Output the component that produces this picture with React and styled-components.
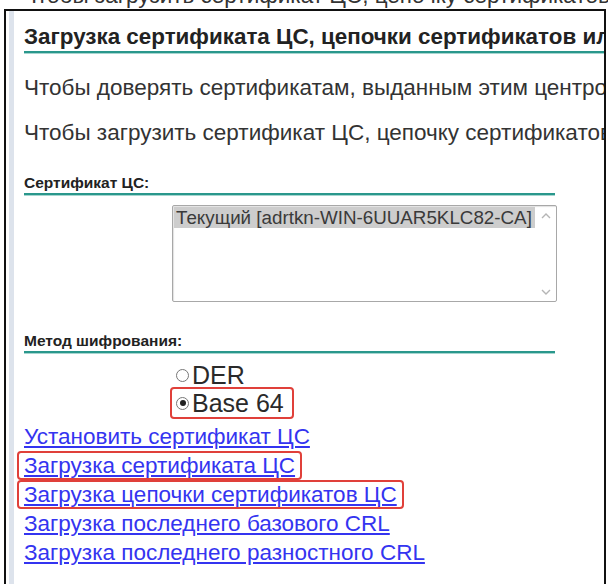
import styled, { createGlobalStyle } from "styled-components";

const GlobalStyle = createGlobalStyle`
  html, body {
    margin: 0;
    padding: 0;
    background: #fff;
  }
  body {
    font-family: "Liberation Sans", Arial, sans-serif;
    color: #2a2a2a;
    overflow: hidden;
  }
`;

const CutLine = styled.div`
  height: 9px;
  overflow: hidden;
  padding-left: 22px;
  font-size: 22.5px;
  line-height: 26px;
  white-space: nowrap;
  color: #333;
  span {
    display: block;
    margin-top: -17px;
  }
`;

const Frame = styled.div`
  margin-left: 4px;
  margin-right: 2px;
  min-height: 600px;
  border: 2px solid #111;
  border-bottom: none;
  display: flex;
`;

const SideBar = styled.div`
  width: 5px;
  margin-left: 3px;
  background: #dde3ec;
  flex-shrink: 0;
`;

const Content = styled.div`
  flex: 1;
  padding-left: 10px;
  min-width: 0;
  overflow: hidden;
`;

const Title = styled.h2`
  margin: 13px 0 0;
  font-size: 22.4px;
  font-weight: bold;
  line-height: 26px;
  white-space: nowrap;
  color: #222;
  border-bottom: 2px solid #2a978c;
  box-shadow: 0 1px 0 #a6d6d0;
  padding-bottom: 1px;
`;

const Para = styled.p`
  margin: ${(p) => p.$top}px 0 0;
  font-size: 22.5px;
  line-height: 26px;
  white-space: nowrap;
  color: #333;
`;

const SectionHead = styled.div`
  margin-top: ${(p) => p.$top}px;
  width: 531px;
  font-size: 15.5px;
  font-weight: bold;
  line-height: 18px;
  color: #222;
  border-bottom: 2px solid #2a978c;
  box-shadow: 0 1px 0 #a6d6d0;
  padding-bottom: 1px;
`;

const FieldRow = styled.div`
  padding-left: 148px;
  margin-top: ${(p) => p.$top || 0}px;
`;

const ListBox = styled.div`
  width: 383px;
  height: 95px;
  border: 1px solid #a8a8a8;
  border-radius: 2px;
  box-shadow: inset 1px 1px 1px rgba(0, 0, 0, 0.12);
  display: flex;
  background: #fff;
`;

const Options = styled.div`
  flex: 1;
  padding: 1px 0 0 1px;
  overflow: hidden;
`;

const Option = styled.div`
  display: inline-block;
  padding: 0 3px 0 2px;
  font-size: 18.8px;
  line-height: 21px;
  white-space: nowrap;
  color: #3a3a3a;
  background: ${(p) => (p.$selected ? "#cdcdcd" : "transparent")};
`;

const ScrollCol = styled.div`
  width: 20px;
  display: flex;
  flex-direction: column;
  justify-content: space-between;
  align-items: center;
  padding: 6px 0 5px;
`;

const RadioList = styled.div`
  padding-left: 152px;
  margin-top: 9px;
  display: flex;
  flex-direction: column;
  align-items: flex-start;
  gap: 2px;
`;

const RadioLabel = styled.label`
  display: inline-flex;
  align-items: center;
  gap: 3px;
  font-size: 25px;
  line-height: 26px;
  color: #2a2a2a;
`;

const RadioDot = styled.span`
  width: 13px;
  height: 13px;
  border-radius: 50%;
  border: 1px solid #777;
  box-sizing: border-box;
  display: inline-flex;
  align-items: center;
  justify-content: center;
  background: #fff;
  &::after {
    content: "";
    width: 6px;
    height: 6px;
    border-radius: 50%;
    background: ${(p) => (p.$checked ? "#222" : "transparent")};
  }
`;

const Marked = styled.span`
  display: inline-flex;
  align-items: center;
  border: 2px solid #e0403a;
  border-radius: 4px;
  margin: ${(p) => p.$m};
  padding: ${(p) => p.$p};
`;

const Links = styled.div`
  margin-top: 6px;
  display: flex;
  flex-direction: column;
  align-items: flex-start;
`;

const LinkRow = styled.div`
  height: 29px;
  display: flex;
  align-items: center;
`;

const Link = styled.a`
  font-size: 22.5px;
  line-height: 23px;
  color: #3434f0;
  text-decoration: underline;
  white-space: nowrap;
`;

const Chevron = ({ up }) => (
  <svg width="10" height="7" viewBox="0 0 10 7">
    <path
      d={up ? "M1 6 L5 2 L9 6" : "M1 1 L5 5 L9 1"}
      fill="none"
      stroke="#b5b5b5"
      strokeWidth="1.4"
    />
  </svg>
);

const links = [
  { text: "Установить сертификат ЦС" },
  { text: "Загрузка сертификата ЦС", marked: true },
  { text: "Загрузка цепочки сертификатов ЦС", marked: true },
  { text: "Загрузка последнего базового CRL" },
  { text: "Загрузка последнего разностного CRL" },
];

export default function App() {
  return (
    <>
      <GlobalStyle />
      <CutLine>
        <span>Чтобы загрузить сертификат ЦС, цепочку сертификатов или CRL, выберите команду ниже</span>
      </CutLine>
      <Frame>
        <SideBar />
        <Content>
          <Title>Загрузка сертификата ЦС, цепочки сертификатов или CRL</Title>
          <Para $top={22}>
            Чтобы доверять сертификатам, выданным этим центром сертификации, установите цепочку
          </Para>
          <Para $top={19}>
            Чтобы загрузить сертификат ЦС, цепочку сертификатов или CRL, выберите сертификат
          </Para>
          <SectionHead $top={28}>Сертификат ЦС:</SectionHead>
          <FieldRow $top={10}>
            <ListBox>
              <Options>
                <Option $selected>Текущий [adrtkn-WIN-6UUAR5KLC82-CA]</Option>
              </Options>
              <ScrollCol>
                <Chevron up />
                <Chevron />
              </ScrollCol>
            </ListBox>
          </FieldRow>
          <SectionHead $top={30}>Метод шифрования:</SectionHead>
          <RadioList>
            <RadioLabel>
              <RadioDot />
              DER
            </RadioLabel>
            <Marked $m="-3px 0 -3px -6px" $p="1px 8px 1px 4px">
              <RadioLabel>
                <RadioDot $checked />
                Base 64
              </RadioLabel>
            </Marked>
          </RadioList>
          <Links>
            {links.map((l) => (
              <LinkRow key={l.text}>
                {l.marked ? (
                  <Marked $m="0 0 0 -7px" $p="1px 5px">
                    <Link href="#">{l.text}</Link>
                  </Marked>
                ) : (
                  <Link href="#">{l.text}</Link>
                )}
              </LinkRow>
            ))}
          </Links>
        </Content>
      </Frame>
    </>
  );
}
